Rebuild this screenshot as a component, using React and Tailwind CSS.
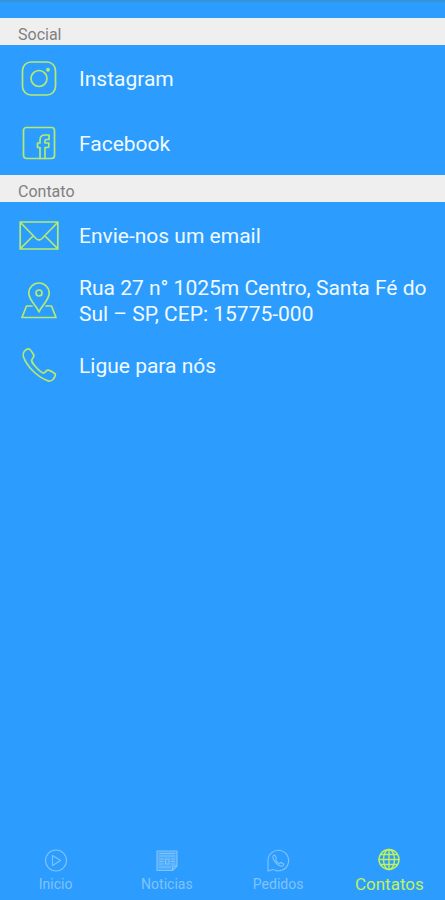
import React, { useState } from "react";

const socialLinks = [
  { label: "Instagram", href: "#instagram", icon: InstagramIcon },
  { label: "Facebook", href: "#facebook", icon: FacebookIcon },
];

const contactLinks = [
  { label: "Envie-nos um email", href: "#email", icon: MailIcon },
  { label: "Rua 27 n° 1025m Centro, Santa Fé do Sul – SP, CEP: 15775-000", href: "#mapa", icon: MapIcon },
  { label: "Ligue para nós", href: "#telefone", icon: PhoneIcon },
];

const tabs = [
  { label: "Inicio", icon: PlayIcon },
  { label: "Noticias", icon: NewsIcon },
  { label: "Pedidos", icon: WhatsappIcon },
  { label: "Contatos", icon: GlobeIcon },
];

function LineIcon({ children }) {
  return (
    <svg
      viewBox="0 0 40 40"
      className="size-10 shrink-0"
      fill="none"
      stroke="currentColor"
      strokeWidth="1.7"
      strokeLinejoin="round"
      strokeLinecap="round"
      aria-hidden="true"
    >
      {children}
    </svg>
  );
}

function InstagramIcon() {
  return (
    <LineIcon>
      <rect x="3.5" y="4" width="33" height="33" rx="8.5" />
      <circle cx="20" cy="20.5" r="8" />
      <circle cx="29" cy="11.8" r="1.1" fill="currentColor" />
    </LineIcon>
  );
}

function FacebookIcon() {
  return (
    <LineIcon>
      <rect x="4.5" y="4.5" width="31" height="31" rx="3" />
      <path d="M21 35.5V24.5H18.5V20H21V17Q21 12 26 12H30V16.5H27.5Q26 16.5 26 18V20H30L29.5 24.5H26V35.5" />
    </LineIcon>
  );
}

function MailIcon() {
  return (
    <LineIcon>
      <path d="M1.2 7H38.8V34H1.2Z" />
      <path d="M1.5 7.5L17 23.5Q20 26.5 23 23.5L38.5 7.5" />
      <path d="M1.5 33.5L13.5 21.5M38.5 33.5L26.5 21.5" />
    </LineIcon>
  );
}

function MapIcon() {
  return (
    <LineIcon>
      <path d="M20 32C18.500 27 9.800 20 9.800 13.200A10.200 10.200 0 0 1 30.200 13.200C30.200 20 21.500 27 20 32Z" />
      <circle cx="20" cy="13" r="3" />
      <path d="M13 26H7.500L3 37.500H37L32.500 26H27" />
    </LineIcon>
  );
}

function PhoneIcon() {
  return (
    <LineIcon>
      <path d="M5.500 6Q8 3.500 10.500 4Q12 5.500 14.500 9.500Q15.500 11.500 13.500 13.500C11.500 15.500 13 17.500 15.500 20.500C18.500 24 22 27 24 28C25.500 28.500 26.500 26.500 28.200 25.300C30 24.500 33 26.500 36.300 29Q36.800 31 34 34.500Q31.500 37 28 35.500C18 31.500 8 21.500 4.300 11.500Q3.500 8.500 5.500 6Z" />
    </LineIcon>
  );
}

function TabIcon({ children }) {
  return (
    <svg
      viewBox="0 0 24 24"
      className="size-6"
      fill="none"
      stroke="currentColor"
      strokeWidth="1.1"
      strokeLinejoin="round"
      strokeLinecap="round"
      aria-hidden="true"
    >
      {children}
    </svg>
  );
}

function PlayIcon() {
  return (
    <TabIcon>
      <circle cx="12" cy="12.5" r="10.5" />
      <path d="M8.500 7.500L16.500 12.500L8.500 17.500Z" />
    </TabIcon>
  );
}

function NewsIcon() {
  return (
    <TabIcon>
      <path d="M2 3H22V18L17.500 22.500H2Z" fill="currentColor" fillOpacity="0.4" />
      <path d="M17.500 22.500V18H22" />
      <path d="M4.500 5.500H19.500M4.500 8H19.500M4.500 11H8M4.500 13.500H8M4.500 16H8M4.500 19H15" />
      <path d="M10.500 11H14V16H10.500ZM16.500 11H19.500M16.500 13.500H19.500M16.500 16H19.500" />
    </TabIcon>
  );
}

function WhatsappIcon() {
  return (
    <TabIcon>
      <path d="M2 23V12.500A10.300 10.300 0 1 1 7 21.400Z" />
      <path d="M8.500 7C6.500 7.500 6.500 9.500 7.500 11.500C9 14.500 11.500 17 14.500 18C16.500 18.500 17.800 17.500 17.700 16L15 14.300L13.500 15.800C11.800 15 10.300 13.500 9.500 11.700L10.500 10Z" />
    </TabIcon>
  );
}

function GlobeIcon() {
  return (
    <TabIcon>
      <g strokeWidth="1.4">
        <circle cx="12" cy="11.500" r="10" />
        <ellipse cx="12" cy="11.500" rx="5.500" ry="10" />
        <path d="M12 1.500V21.500M2 11.500H22M3.500 6.500H20.500M3.500 16.500H20.500" />
      </g>
    </TabIcon>
  );
}

const Section = ({ title, items }) => (
  <section>
    <h2 className="h-[27px] bg-[#efefef] pt-1 pl-[18px] text-base leading-[26px] text-[#808080]">{title}</h2>
    <ul>
      {items.map(({ label, href, icon: Icon }) => (
        <li key={label}>
          <a href={href} className="flex min-h-[65px] items-center gap-5 pl-[19px] text-[#b4ea70]">
            <Icon />
            <span className="pt-0.5 text-[21px] leading-[26px] text-[#f0faff]">{label}</span>
          </a>
        </li>
      ))}
    </ul>
  </section>
);

export default function App() {
  const [activeTab, setActiveTab] = useState("Contatos");

  return (
    <div className="flex min-h-screen flex-col border-t-2 border-[#3593d8] bg-[#2c9dff] font-['Roboto',sans-serif]">
      <main className="grow pt-4">
        <Section title="Social" items={socialLinks} />
        <Section title="Contato" items={contactLinks} />
      </main>

      {/* Tab bar */}
      <nav className="grid grid-cols-4 pb-1">
        {tabs.map(({ label, icon: Icon }) => (
          <button
            key={label}
            type="button"
            onClick={() => setActiveTab(label)}
            className={
              activeTab === label
                ? "flex flex-col items-center text-[17px] leading-6 text-[#c0f25c]"
                : "flex flex-col items-center text-sm leading-6 text-[#80c3fc]"
            }
          >
            <Icon />
            {label}
          </button>
        ))}
      </nav>
    </div>
  );
}
